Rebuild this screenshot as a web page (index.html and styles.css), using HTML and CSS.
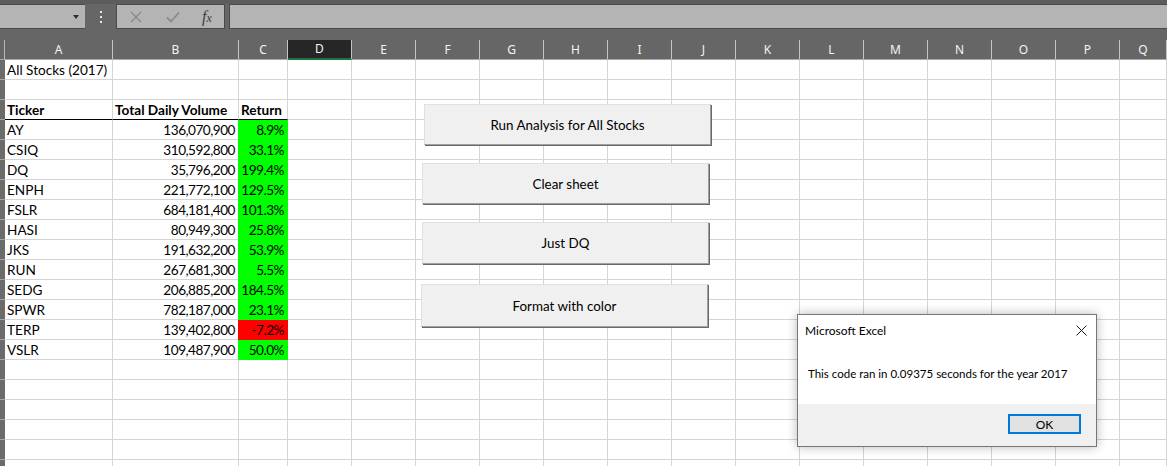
FILE: index.html
```html
<!DOCTYPE html>
<html>
<head>
<meta charset="utf-8">
<title>Excel</title>
<link rel="stylesheet" href="styles.css">
</head>
<body>
<div class="app">
  <div class="toolbar">
    <div class="namebox"><span class="caret"></span></div>
    <div class="grip">
      <svg width="4" height="12" viewBox="0 0 4 12"><rect x="1" y="0" width="2" height="2" fill="#e6e6e6"/><rect x="1" y="5" width="2" height="2" fill="#e6e6e6"/><rect x="1" y="10" width="2" height="2" fill="#e6e6e6"/></svg>
    </div>
    <div class="fxbox">
      <svg class="ico" width="12" height="12" viewBox="0 0 12 12"><path d="M1 1 L11 11 M11 1 L1 11" stroke="#8a8a8a" stroke-width="1.4" fill="none"/></svg>
      <svg class="ico" width="14" height="12" viewBox="0 0 14 12"><path d="M1 6.5 L5 10.5 L13 1.5" stroke="#8a8a8a" stroke-width="1.8" fill="none"/></svg>
      <span class="fx">f<span class="fxx">x</span></span>
    </div>
    <div class="formula"></div>
  </div>

  <div class="sheet">
    <div class="row head">
      <span></span><span>A</span><span>B</span><span>C</span><span class="sel">D</span><span>E</span><span>F</span><span>G</span><span>H</span><span>I</span><span>J</span><span>K</span><span>L</span><span>M</span><span>N</span><span>O</span><span>P</span><span>Q</span>
    </div>
    <div class="row"><span></span><span>All Stocks (2017)</span><span></span><span></span><span></span><span></span><span></span><span></span><span></span><span></span><span></span><span></span><span></span><span></span><span></span><span></span><span></span><span></span></div>
    <div class="row"><span></span><span></span><span></span><span></span><span></span><span></span><span></span><span></span><span></span><span></span><span></span><span></span><span></span><span></span><span></span><span></span><span></span><span></span></div>
    <div class="row"><span></span><span class="bold under">Ticker</span><span class="bold under">Total Daily Volume</span><span class="bold under">Return</span><span></span><span></span><span></span><span></span><span></span><span></span><span></span><span></span><span></span><span></span><span></span><span></span><span></span><span></span></div>
    <div class="row"><span></span><span>AY</span><span class="num">136,070,900</span><span class="num pos">8.9%</span><span></span><span></span><span></span><span></span><span></span><span></span><span></span><span></span><span></span><span></span><span></span><span></span><span></span><span></span></div>
    <div class="row"><span></span><span>CSIQ</span><span class="num">310,592,800</span><span class="num pos">33.1%</span><span></span><span></span><span></span><span></span><span></span><span></span><span></span><span></span><span></span><span></span><span></span><span></span><span></span><span></span></div>
    <div class="row"><span></span><span>DQ</span><span class="num">35,796,200</span><span class="num pos">199.4%</span><span></span><span></span><span></span><span></span><span></span><span></span><span></span><span></span><span></span><span></span><span></span><span></span><span></span><span></span></div>
    <div class="row"><span></span><span>ENPH</span><span class="num">221,772,100</span><span class="num pos">129.5%</span><span></span><span></span><span></span><span></span><span></span><span></span><span></span><span></span><span></span><span></span><span></span><span></span><span></span><span></span></div>
    <div class="row"><span></span><span>FSLR</span><span class="num">684,181,400</span><span class="num pos">101.3%</span><span></span><span></span><span></span><span></span><span></span><span></span><span></span><span></span><span></span><span></span><span></span><span></span><span></span><span></span></div>
    <div class="row"><span></span><span>HASI</span><span class="num">80,949,300</span><span class="num pos">25.8%</span><span></span><span></span><span></span><span></span><span></span><span></span><span></span><span></span><span></span><span></span><span></span><span></span><span></span><span></span></div>
    <div class="row"><span></span><span>JKS</span><span class="num">191,632,200</span><span class="num pos">53.9%</span><span></span><span></span><span></span><span></span><span></span><span></span><span></span><span></span><span></span><span></span><span></span><span></span><span></span><span></span></div>
    <div class="row"><span></span><span>RUN</span><span class="num">267,681,300</span><span class="num pos">5.5%</span><span></span><span></span><span></span><span></span><span></span><span></span><span></span><span></span><span></span><span></span><span></span><span></span><span></span><span></span></div>
    <div class="row"><span></span><span>SEDG</span><span class="num">206,885,200</span><span class="num pos">184.5%</span><span></span><span></span><span></span><span></span><span></span><span></span><span></span><span></span><span></span><span></span><span></span><span></span><span></span><span></span></div>
    <div class="row"><span></span><span>SPWR</span><span class="num">782,187,000</span><span class="num pos">23.1%</span><span></span><span></span><span></span><span></span><span></span><span></span><span></span><span></span><span></span><span></span><span></span><span></span><span></span><span></span></div>
    <div class="row"><span></span><span>TERP</span><span class="num">139,402,800</span><span class="num neg">-7.2%</span><span></span><span></span><span></span><span></span><span></span><span></span><span></span><span></span><span></span><span></span><span></span><span></span><span></span><span></span></div>
    <div class="row"><span></span><span>VSLR</span><span class="num">109,487,900</span><span class="num pos">50.0%</span><span></span><span></span><span></span><span></span><span></span><span></span><span></span><span></span><span></span><span></span><span></span><span></span><span></span><span></span></div>
    <div class="row"><span></span><span></span><span></span><span></span><span></span><span></span><span></span><span></span><span></span><span></span><span></span><span></span><span></span><span></span><span></span><span></span><span></span><span></span></div>
    <div class="row"><span></span><span></span><span></span><span></span><span></span><span></span><span></span><span></span><span></span><span></span><span></span><span></span><span></span><span></span><span></span><span></span><span></span><span></span></div>
    <div class="row"><span></span><span></span><span></span><span></span><span></span><span></span><span></span><span></span><span></span><span></span><span></span><span></span><span></span><span></span><span></span><span></span><span></span><span></span></div>
    <div class="row"><span></span><span></span><span></span><span></span><span></span><span></span><span></span><span></span><span></span><span></span><span></span><span></span><span></span><span></span><span></span><span></span><span></span><span></span></div>
    <div class="row"><span></span><span></span><span></span><span></span><span></span><span></span><span></span><span></span><span></span><span></span><span></span><span></span><span></span><span></span><span></span><span></span><span></span><span></span></div>
    <div class="row"><span></span><span></span><span></span><span></span><span></span><span></span><span></span><span></span><span></span><span></span><span></span><span></span><span></span><span></span><span></span><span></span><span></span><span></span></div>
  </div>

  <button class="btn btn-run">Run Analysis for All Stocks</button>
  <button class="btn btn-clear">Clear sheet</button>
  <button class="btn btn-dq">Just DQ</button>
  <button class="btn btn-color">Format with color</button>

  <div class="dialog">
    <div class="dlg-title">
      <span>Microsoft Excel</span>
      <svg class="dlg-close" width="11" height="11" viewBox="0 0 11 11"><path d="M0.5 0.5 L10.5 10.5 M10.5 0.5 L0.5 10.5" stroke="#1a1a1a" stroke-width="1" fill="none"/></svg>
    </div>
    <div class="dlg-body">This code ran in 0.09375 seconds for the year 2017</div>
    <div class="dlg-foot"><button class="dlg-ok">OK</button></div>
  </div>
</div>
</body>
</html>
```

FILE: styles.css
```css
* { box-sizing: border-box; }
html, body { margin: 0; padding: 0; }
body { width: 1167px; height: 466px; overflow: hidden; background: #fff; }

.app { position: relative; width: 1167px; height: 466px; overflow: hidden; }

.toolbar {
  height: 40px;
  background: #666666;
  border-top: 4px solid #5c5c5c;
  display: flex;
  align-items: flex-start;
}
.namebox {
  width: 85px; height: 25px;
  background: #b4b4b4;
  border-top: 1px solid #4a4a4a;
  border-bottom: 1px solid #4a4a4a;
  position: relative;
}
.caret {
  position: absolute; left: 73px; top: 10px;
  width: 0; height: 0;
  border-left: 3.5px solid transparent;
  border-right: 3.5px solid transparent;
  border-top: 4px solid #303030;
}
.grip { width: 31px; height: 25px; display: flex; align-items: center; justify-content: center; }
.fxbox {
  width: 109px; height: 25px;
  background: #b4b4b4;
  border: 1px solid #4a4a4a;
  display: flex; align-items: center;
  padding-left: 13px;
}
.fxbox .ico { display: block; }
.fxbox .ico + .ico { margin-left: 24px; }
.fx {
  margin-left: 22px;
  font-family: "Liberation Serif", serif;
  font-style: italic;
  font-size: 16px;
  color: #3c3c3c;
  line-height: 1;
}
.fxx { font-size: 12px; }
.formula {
  flex: 1; height: 25px; margin-left: 4px;
  background: #b4b4b4;
  border-top: 1px solid #4a4a4a;
  border-bottom: 1px solid #4a4a4a;
  border-left: 1px solid #4a4a4a;
}

.row {
  display: grid;
  grid-template-columns: 5px 108px 126px 49px repeat(13, 64px) 47px;
  height: 20px;
}
.row > span {
  border-right: 1px solid #d4d4d4;
  border-bottom: 1px solid #d4d4d4;
  font-family: Lato, "Liberation Sans", sans-serif;
  font-size: 13.6px;
  color: #000;
  white-space: nowrap;
  display: flex;
  align-items: flex-end;
  padding: 0 2px 1px 2px;
  line-height: 16px;
}
.row > span:first-child {
  background: #6b6b6b;
  border-right: none;
  border-bottom: 1px solid #a8a8a8;
  padding: 0;
}
.row.head > span {
  background: #666666;
  color: #f4f4f4;
  border-right: 1px solid #c4c4c4;
  border-bottom: 1px solid #a9a9a9;
  font-family: "Noto Sans", sans-serif;
  font-size: 12px;
  align-items: center;
  justify-content: center;
  padding: 0;
}
.row.head > span:first-child { background: #666666; border-right: 1px solid #b8b8b8; }
.row.head > span.sel {
  background: #262626;
  border-bottom: 2px solid #217346;
}
.row > span.num { justify-content: flex-end; letter-spacing: -0.5px; padding-right: 3px; }
.row > span.bold { font-weight: 700; }
.row > span.under { border-bottom-color: #000; }
.row > span.pos { background: #00ff00; border-color: #00ff00; box-shadow: -1px 0 0 #00ff00; }
.row > span.neg { background: #ff0000; border-color: #ff0000; box-shadow: -1px 0 0 #ff0000; }

.btn {
  position: absolute;
  width: 287px;
  height: 41px;
  background: #f0f0f0;
  border-top: 1px solid #e0e0e0;
  border-left: 1px solid #e0e0e0;
  border-right: 1px solid #a0a0a0;
  border-bottom: 1px solid #a0a0a0;
  box-shadow: 1px 1px 0 #696969;
  font-family: Lato, "Liberation Sans", sans-serif;
  font-size: 13.4px;
  color: #000;
  padding: 0;
  margin: 0;
}
.btn-run { left: 424px; top: 104px; }
.btn-clear { left: 422px; top: 163px; }
.btn-dq { left: 422px; top: 222px; height: 42px; }
.btn-color { left: 421px; top: 284px; height: 43px; }

.dialog {
  position: absolute;
  left: 797px; top: 314px;
  width: 300px; height: 133px;
  background: #fff;
  border: 1px solid #767676;
  box-shadow: 0 0 10px rgba(0,0,0,0.28);
  display: flex; flex-direction: column;
  font-family: Lato, "Liberation Sans", sans-serif;
  font-size: 11.5px;
  color: #000;
}
.dlg-title {
  height: 31px;
  display: flex; align-items: center; justify-content: space-between;
  padding: 0 9px 0 7px;
  font-size: 12px;
}
.dlg-body {
  flex: 1;
  padding: 21px 0 0 10px;
}
.dlg-foot {
  height: 42px;
  background: #f0f0f0;
  display: flex; justify-content: flex-end; align-items: flex-start;
  padding: 10px 15px 0 0;
}
.dlg-ok {
  width: 73px; height: 20px;
  background: #e1e1e1;
  border: 2px solid #0078d7;
  font-family: Lato, "Liberation Sans", sans-serif;
  font-size: 12px;
  color: #000;
  padding: 0; margin: 0;
}
```
